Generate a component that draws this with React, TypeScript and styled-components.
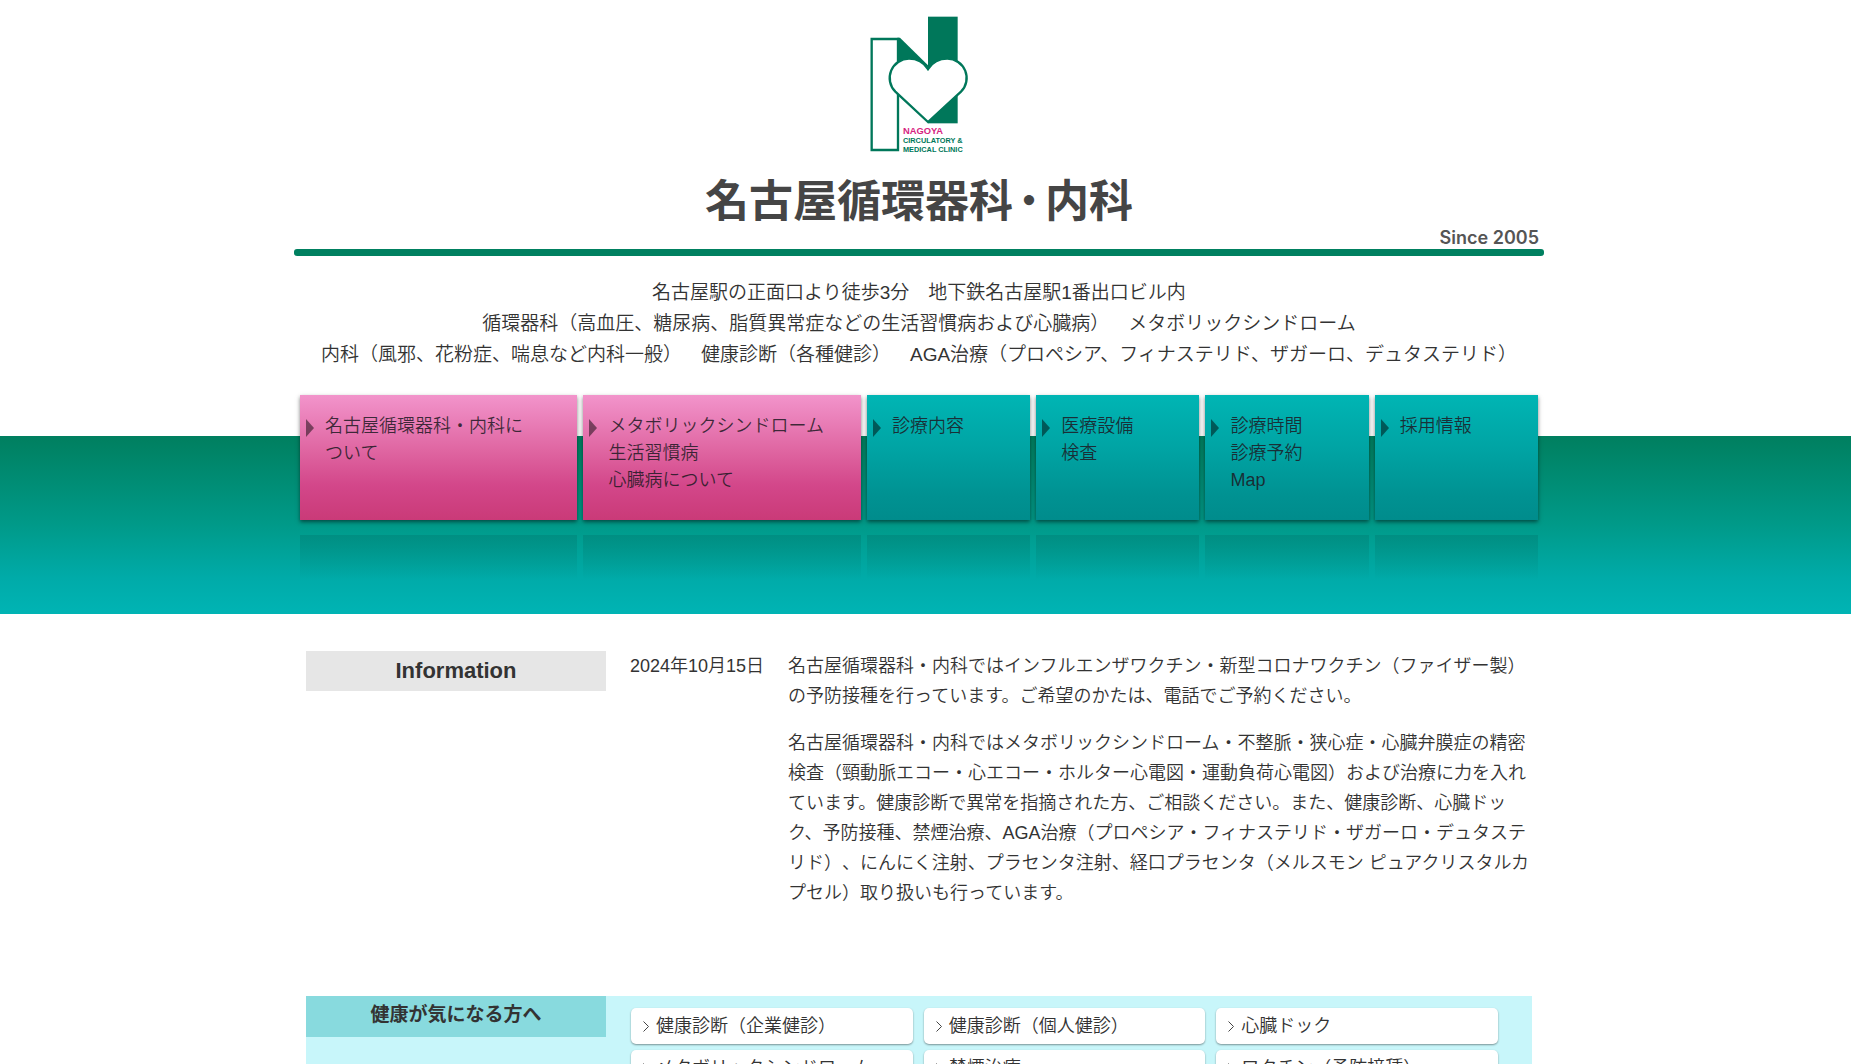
import React from "react";
import styled, { createGlobalStyle } from "styled-components";

const GlobalStyle = createGlobalStyle`
  * { box-sizing: border-box; }
  body {
    margin: 0;
    color: #333;
    background: #fff;
    font-family: "Liberation Sans", "Noto Sans CJK JP", sans-serif;
    font-size: 18px;
    font-weight: 350;
    line-height: 30px;
    text-spacing-trim: space-all;
  }
  h1, h2, p, ul { margin: 0; padding: 0; }
  ul { list-style: none; }
  a { color: inherit; text-decoration: none; }
`;

const Page = styled.div`
  height: 100vh;
  overflow: hidden;
`;

const Gutter = styled.div`
  padding-right: 13px;
`;

const Container = styled.div<{ $inset?: number }>`
  max-width: 1250px;
  margin: 0 auto;
  padding: 0 ${(p) => p.$inset ?? 0}px;
`;

const Header = styled.header`
  display: flex;
  flex-direction: column;
  align-items: center;
  padding-top: 13px;
`;

const Rule = styled.div`
  align-self: stretch;
  height: 7px;
  border-radius: 3px;
  background: #008060;
`;

const Title = styled.h1`
  margin-top: 23px;
  color: #454545;
  font-size: 44px;
  font-weight: 700;
  line-height: 48px;
  white-space: nowrap;
`;

const Dot = styled.span`
  padding: 0 5px;
  font-weight: 500;
  font-feature-settings: "halt";
`;

const Since = styled.p`
  align-self: flex-end;
  padding-right: 5px;
  color: #555;
  font-family: Inter, sans-serif;
  font-size: 18px;
  font-weight: 600;
  line-height: 23px;
`;

const Intro = styled.p`
  padding: 21px 0 25px;
  font-size: 19px;
  line-height: 31px;
  text-align: center;
`;

const Band = styled.nav`
  height: 219px;
  background: linear-gradient(#007f5f, #009a89 50%, #00aba9 80%, #00b4b4) bottom / 100% 178px no-repeat;
`;

const Tiles = styled.ul`
  display: grid;
  grid-template-columns: repeat(2, 277fr) repeat(4, 163fr);
  gap: 6px;
`;

const Tile = styled.a<{ $pink?: boolean }>`
  display: flex;
  gap: 11px;
  height: 125px;
  padding: 18px 6px 0;
  line-height: 27px;
  color: rgba(30, 25, 35, 0.85);
  background: ${(p) =>
    p.$pink
      ? "linear-gradient(#f294cb, #df65a1 45%, #d3478a 72%, #ca3a78)"
      : "linear-gradient(#00b5b4, #00a3a3 45%, #009292 80%, #008c8c)"};
  box-shadow: 0 2px 4px rgba(0, 0, 0, 0.5);

  svg { flex: none; margin-top: 6px; }
`;

const Reflection = styled.div`
  height: 45px;
  margin-top: 15px;
  background: linear-gradient(rgba(0, 125, 115, 0.45), rgba(0, 140, 130, 0));
`;

const News = styled.section`
  display: grid;
  grid-template-columns: 300px max-content 1fr;
  gap: 24px;
  padding: 37px 0 88px;
`;

const Heading = styled.h2<{ $teal?: boolean }>`
  align-self: start;
  height: ${(p) => (p.$teal ? 41 : 40)}px;
  background: ${(p) => (p.$teal ? "#88dade" : "#e6e6e6")};
  font-size: ${(p) => (p.$teal ? 19 : 22)}px;
  font-weight: 700;
  line-height: ${(p) => (p.$teal ? 38 : 40)}px;
  text-align: center;
`;

const NewsBody = styled.div`
  display: grid;
  gap: 17px;
`;

const Health = styled.section`
  display: grid;
  grid-template-columns: 300px 1fr;
  gap: 25px;
  background: #c8f6fa;
`;

const Cards = styled.ul`
  display: grid;
  grid-template-columns: repeat(3, 1fr);
  gap: 6px 11px;
  padding: 12px 34px 12px 0;
`;

const Card = styled.a`
  display: flex;
  align-items: center;
  gap: 7px;
  height: 36px;
  padding-left: 12px;
  border-radius: 5px;
  background: #fff;
  box-shadow: 0 1px 2px rgba(0, 0, 0, 0.4);
  white-space: nowrap;
`;

const Logo = () => (
  <svg width="103" height="142" viewBox="563 39 309 426" role="img" aria-label="Nagoya Circulatory & Medical Clinic">
    <g fill="#00775a">
      <rect x="743" y="50" width="89" height="320" />
      <path d="M651 113H659L743 196V225H651Z" />
    </g>
    <g fill="#fff" stroke="#00775a" strokeWidth="7">
      <path d="M574 117H653V450H574Z" />
      <path d="M743 207C730 187 710 176 686 176A58 58 0 0 0 645 275L743 366L842 275A58 58 0 0 0 801 176C777 176 756 187 743 207Z" />
    </g>
    <g fontFamily="Liberation Sans, sans-serif" fontWeight="700" fill="#00775a" fontSize="22">
      <text x="668" y="401" fontSize="28" fill="#d6247f">NAGOYA</text>
      <text x="668" y="428">CIRCULATORY &amp;</text>
      <text x="668" y="455">MEDICAL CLINIC</text>
    </g>
  </svg>
);

const Triangle = () => (
  <svg width="8" height="18" viewBox="0 0 8 18" aria-hidden="true">
    <path d="M0 0L8 9L0 18Z" fill="#000" fillOpacity="0.48" />
  </svg>
);

const Chevron = () => (
  <svg width="6" height="11" viewBox="0 0 6 11" fill="none" stroke="#444" aria-hidden="true">
    <path d="M0.5 0.5L5.5 5.5L0.5 10.5" />
  </svg>
);

const tiles = [
  { pink: true, lines: ["名古屋循環器科・内科に", "ついて"] },
  { pink: true, lines: ["メタボリックシンドローム", "生活習慣病", "心臓病について"] },
  { pink: false, lines: ["診療内容"] },
  { pink: false, lines: ["医療設備", "検査"] },
  { pink: false, lines: ["診療時間", "診療予約", "Map"] },
  { pink: false, lines: ["採用情報"] },
];

const cards = [
  "健康診断（企業健診）",
  "健康診断（個人健診）",
  "心臓ドック",
  "メタボリックシンドローム",
  "禁煙治療",
  "ワクチン（予防接種）",
];

export default function App() {
  return (
    <Page lang="ja">
      <GlobalStyle />
      <Gutter>
        <Container>
          <Header>
            <Logo />
            <Title>
              名古屋循環器科<Dot>・</Dot>内科
            </Title>
            <Since>Since 2005</Since>
            <Rule />
          </Header>
          <Intro>
            名古屋駅の正面口より徒歩3分　地下鉄名古屋駅1番出口ビル内
            <br />
            循環器科（高血圧、糖尿病、脂質異常症などの生活習慣病および心臓病）　メタボリックシンドローム
            <br />
            内科（風邪、花粉症、喘息など内科一般）　健康診断（各種健診）　AGA治療（プロペシア、フィナステリド、ザガーロ、デュタステリド）
          </Intro>
        </Container>
      </Gutter>
      <Band>
        <Gutter>
          <Container $inset={6}>
            <Tiles>
              {tiles.map((t) => (
                <li key={t.lines[0]}>
                  <Tile href="#" $pink={t.pink}>
                    <Triangle />
                    <span>
                      {t.lines.map((line, i) => (
                        <React.Fragment key={line}>
                          {i > 0 && <br />}
                          {line}
                        </React.Fragment>
                      ))}
                    </span>
                  </Tile>
                  <Reflection />
                </li>
              ))}
            </Tiles>
          </Container>
        </Gutter>
      </Band>
      <Gutter>
        <Container $inset={12}>
          <News>
            <Heading>Information</Heading>
            <time dateTime="2024-10-15">2024年10月15日</time>
            <NewsBody>
              <p>
                名古屋循環器科・内科ではインフルエンザワクチン・新型コロナワクチン（ファイザー製）の予防接種を行っています。ご希望のかたは、電話でご予約ください。
              </p>
              <p>
                名古屋循環器科・内科ではメタボリックシンドローム・不整脈・狭心症・心臓弁膜症の精密検査（頸動脈エコー・心エコー・ホルター心電図・運動負荷心電図）および治療に力を入れています。健康診断で異常を指摘された方、ご相談ください。また、健康診断、心臓ドック、予防接種、禁煙治療、AGA治療（プロペシア・フィナステリド・ザガーロ・デュタステリド）、にんにく注射、プラセンタ注射、経口プラセンタ（メルスモン ピュアクリスタルカプセル）取り扱いも行っています。
              </p>
            </NewsBody>
          </News>
          <Health>
            <Heading $teal>健康が気になる方へ</Heading>
            <Cards>
              {cards.map((c) => (
                <li key={c}>
                  <Card href="#">
                    <Chevron />
                    {c}
                  </Card>
                </li>
              ))}
            </Cards>
          </Health>
        </Container>
      </Gutter>
    </Page>
  );
}
